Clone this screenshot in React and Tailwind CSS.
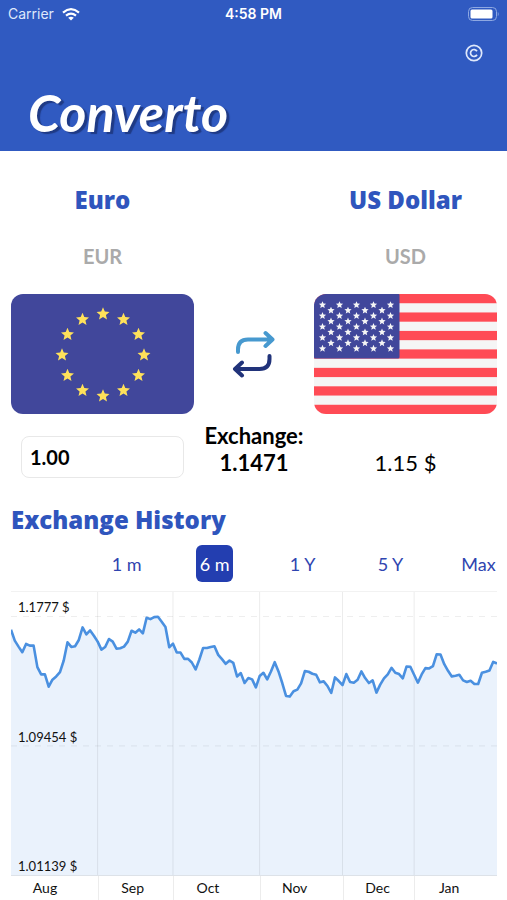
import React, { useState } from "react";

const RATE = 1.1471;

const RANGES = ["1 m", "6 m", "1 Y", "5 Y", "Max"];

// distance from the top of the plot, one entry per trading day
const HISTORY = [
  132, 165, 183, 200, 175, 180, 180, 245, 267, 267, 304, 283, 273, 260, 225,
  170, 184, 182, 163, 125, 146, 134, 150, 168, 192, 184, 160, 168, 189, 188,
  183, 168, 135, 141, 131, 143, 96, 100, 94, 93, 108, 124, 185, 174, 201, 201,
  220, 220, 231, 252, 222, 187, 187, 184, 182, 208, 221, 235, 225, 232, 273,
  263, 293, 278, 282, 306, 272, 262, 282, 258, 230, 258, 293, 332, 334, 318,
  313, 294, 257, 259, 265, 268, 291, 288, 302, 323, 276, 287, 299, 266, 290,
  292, 283, 258, 278, 293, 285, 322, 298, 279, 267, 247, 262, 266, 279, 243,
  244, 268, 292, 267, 248, 249, 242, 206, 207, 236, 256, 273, 271, 268, 285,
  290, 286, 296, 296, 262, 259, 255, 229, 234,
];

const MONTHS = ["Aug", "Sep", "Oct", "Nov", "Dec", "Jan"];
const MONTH_STARTS = [23, 43, 66, 88, 107];

const starPoints = (cx, cy, r) => {
  const points = [];
  for (let i = 0; i < 10; i++) {
    const angle = (Math.PI / 5) * i - Math.PI / 2;
    const radius = i % 2 === 0 ? r : r * 0.45;
    points.push(
      `${(cx + radius * Math.cos(angle)).toFixed(2)},${(cy + radius * Math.sin(angle)).toFixed(2)}`
    );
  }
  return points.join(" ");
};

const EuroFlag = () => (
  <svg viewBox="0 0 183 120" className="w-full rounded-xl" role="img" aria-label="EUR">
    <rect width="183" height="120" fill="#41479b" />
    {Array.from({ length: 12 }, (_, i) => {
      const angle = (Math.PI / 6) * i;
      return (
        <polygon
          key={i}
          points={starPoints(92 + 41 * Math.cos(angle), 61 + 41 * Math.sin(angle), 6.8)}
          fill="#ffe15a"
        />
      );
    })}
  </svg>
);

const UsFlag = () => {
  const stars = [];
  for (let row = 0; row < 9; row++) {
    const count = row % 2 === 0 ? 5 : 4;
    for (let col = 0; col < count; col++) {
      const x = 8.5 + col * 17 + (row % 2) * 8.5;
      stars.push(
        <polygon key={`${row}-${col}`} points={starPoints(x, 11 + row * 5.45, 3.8)} fill="#f5f5f5" />
      );
    }
  }
  return (
    <svg viewBox="0 0 183 120" className="w-full rounded-xl" role="img" aria-label="USD">
      <rect width="183" height="120" fill="#f5f5f5" />
      {Array.from({ length: 7 }, (_, i) => (
        <rect key={i} y={(i * 240) / 13} width="183" height={120 / 13} fill="#ff4b55" />
      ))}
      <path d="M0 0H84.5Q85.5 0 85.5 1V63Q85.5 64.6 84 64.6H1.5Q0 64.6 0 63Z" fill="#41479b" />
      {stars}
    </svg>
  );
};

const SwapIcon = () => (
  <svg viewBox="0 0 44 48" className="h-12 w-11" fill="none" strokeWidth="4" strokeLinecap="round" strokeLinejoin="round">
    <path d="M6 22V19.500Q6 9.500 16 9.500H40.500M33.500 3L40.500 9.500L33.500 16" stroke="#4799cf" />
    <path d="M37.500 26V29Q37.500 39 27.500 39H3M10 32.500L3 39L10 45.500" stroke="#21337a" />
  </svg>
);

const StatusBar = () => (
  <div className="grid h-7 grid-cols-3 items-center px-2 text-sm text-white">
    <div className="flex items-center gap-2">
      <span className="text-[#dfe8fb]">Carrier</span>
      <svg viewBox="0 0 18 13" className="h-[13px] w-[18px]" fill="none" stroke="white" strokeWidth="2.200">
        <path d="M1 4.600Q9 -2.200 17 4.600" />
        <path d="M4 7.700Q9 3.600 14 7.700" />
        <path d="M6.200 9.700Q9 7.600 11.800 9.700L9 12.600Z" fill="white" stroke="none" />
      </svg>
    </div>
    <span className="text-center font-semibold">4:58 PM</span>
    <svg viewBox="0 0 31 14" className="h-[14px] w-[31px] justify-self-end">
      <rect x="0.500" y="0.500" width="28" height="13" rx="4" fill="none" stroke="#8ea8e2" />
      <rect x="2.500" y="2.500" width="22" height="9" rx="1.500" fill="white" />
      <path d="M29.800 4.700Q31.500 7 29.800 9.300Z" fill="#8ea8e2" />
    </svg>
  </div>
);

const Chart = () => {
  const line = HISTORY.map((y, x) => `${x},${y}`).join(" ");
  return (
    <div className="text-[#111]">
      <div className="relative text-[13px]">
        <svg viewBox="0 18 129 855" preserveAspectRatio="none" className="block h-[285px] w-full border-y border-t-[#f2f2f2] border-b-[#dde2e8]">
          <polygon points={`0,873 ${line} 129,873`} fill="#eaf2fc" />
          {MONTH_STARTS.map((x) => (
            <line key={x} x1={x} x2={x} y1="18" y2="873" stroke="#00000014" vectorEffect="non-scaling-stroke" />
          ))}
          {[92, 483].map((y) => (
            <line key={y} x1="0" x2="129" y1={y} y2={y} stroke="#00000012" strokeDasharray="6 6" vectorEffect="non-scaling-stroke" />
          ))}
          <polyline points={line} fill="none" stroke="#4a90e0" strokeWidth="2.600" strokeLinejoin="round" vectorEffect="non-scaling-stroke" />
        </svg>
        <span className="absolute top-1.5 left-[7px] leading-5">1.1777 $</span>
        <span className="absolute top-[136px] left-[7px] leading-5">1.09454 $</span>
        <span className="absolute bottom-0 left-[7px] leading-5">1.01139 $</span>
      </div>
      <div className="grid grid-cols-[23fr_20fr_23fr_22fr_19fr_22fr] text-sm">
        {MONTHS.map((month, i) => (
          <div key={month} className={i === 0 ? "h-6" : "h-6 border-l border-[#ececec]"}>
            <div className="w-[68px] text-center leading-6">{month}</div>
          </div>
        ))}
      </div>
    </div>
  );
};

const App = () => {
  const [amount, setAmount] = useState("1.00");
  const [range, setRange] = useState("6 m");

  const converted = ((parseFloat(amount) || 0) * RATE).toFixed(2);

  return (
    <div className="min-h-screen bg-white font-['Lato',sans-serif] text-black">
      <header className="bg-[#305ac1] pb-[9px] font-['Inter',sans-serif]">
        <StatusBar />
        <div className="flex justify-end px-6 pt-4">
          <button type="button" aria-label="Copyright" className="text-white">
            <svg viewBox="0 0 18 18" className="size-[18px]" fill="none" stroke="#dfe8fb" strokeWidth="1.700">
              <circle cx="9" cy="9" r="7.700" />
              <path d="M12 7.200A3.500 3.500 0 1 0 12 10.800" />
            </svg>
          </button>
        </div>
        <h1 className="px-7 pt-5 font-['Lato',sans-serif] text-[52px] leading-[60px] font-bold text-white italic [text-shadow:3px_2px_1px_#1f3a85]">
          Converto
        </h1>
      </header>

      <main className="pt-[31px] pr-2.5 pl-[11px]">
        <div className="grid grid-cols-[183fr_120fr_183fr] text-center font-['Open_Sans',sans-serif] text-2xl leading-9 font-extrabold text-[#2f55bd]">
          <h2>Euro</h2>
          <span />
          <h2>US Dollar</h2>
        </div>
        <div className="grid grid-cols-[183fr_120fr_183fr] pt-6 text-center text-xl leading-7 font-bold text-[#aaaaaa]">
          <p>EUR</p>
          <span />
          <p>USD</p>
        </div>

        <div className="grid grid-cols-[183fr_120fr_183fr] items-center pt-6">
          <EuroFlag />
          <button type="button" aria-label="Swap currencies" className="justify-self-center">
            <SwapIcon />
          </button>
          <UsFlag />
        </div>

        <div className="grid grid-cols-[183fr_120fr_183fr] pt-2">
          <div className="px-2.5 pt-3.5">
            <input
              type="text"
              inputMode="decimal"
              aria-label="Amount"
              value={amount}
              onChange={(e) => setAmount(e.target.value)}
              className="h-[42px] w-full rounded-lg border border-[#e8e8e8] px-2 text-xl font-bold"
            />
          </div>
          <p className="text-center text-[22px] leading-[27px] font-bold">
            Exchange:
            <br />
            {RATE}
          </p>
          <p className="pt-[27px] text-center text-[22px] leading-[27px]">{converted} $</p>
        </div>

        <h2 className="pt-6 font-['Open_Sans',sans-serif] text-2xl leading-9 font-extrabold text-[#2f55bd]">
          Exchange History
        </h2>
        <div className="flex justify-between pt-[7px] pb-[9px] pl-[20%]">
          {RANGES.map((item) => (
            <button
              key={item}
              type="button"
              onClick={() => setRange(item)}
              className={`h-[37px] w-[37px] rounded-md text-lg whitespace-nowrap ${
                range === item ? "bg-[#233eb0] text-white" : "text-[#2f45b0]"
              }`}
            >
              {item}
            </button>
          ))}
        </div>

        <Chart />
      </main>
    </div>
  );
};

export default App;
